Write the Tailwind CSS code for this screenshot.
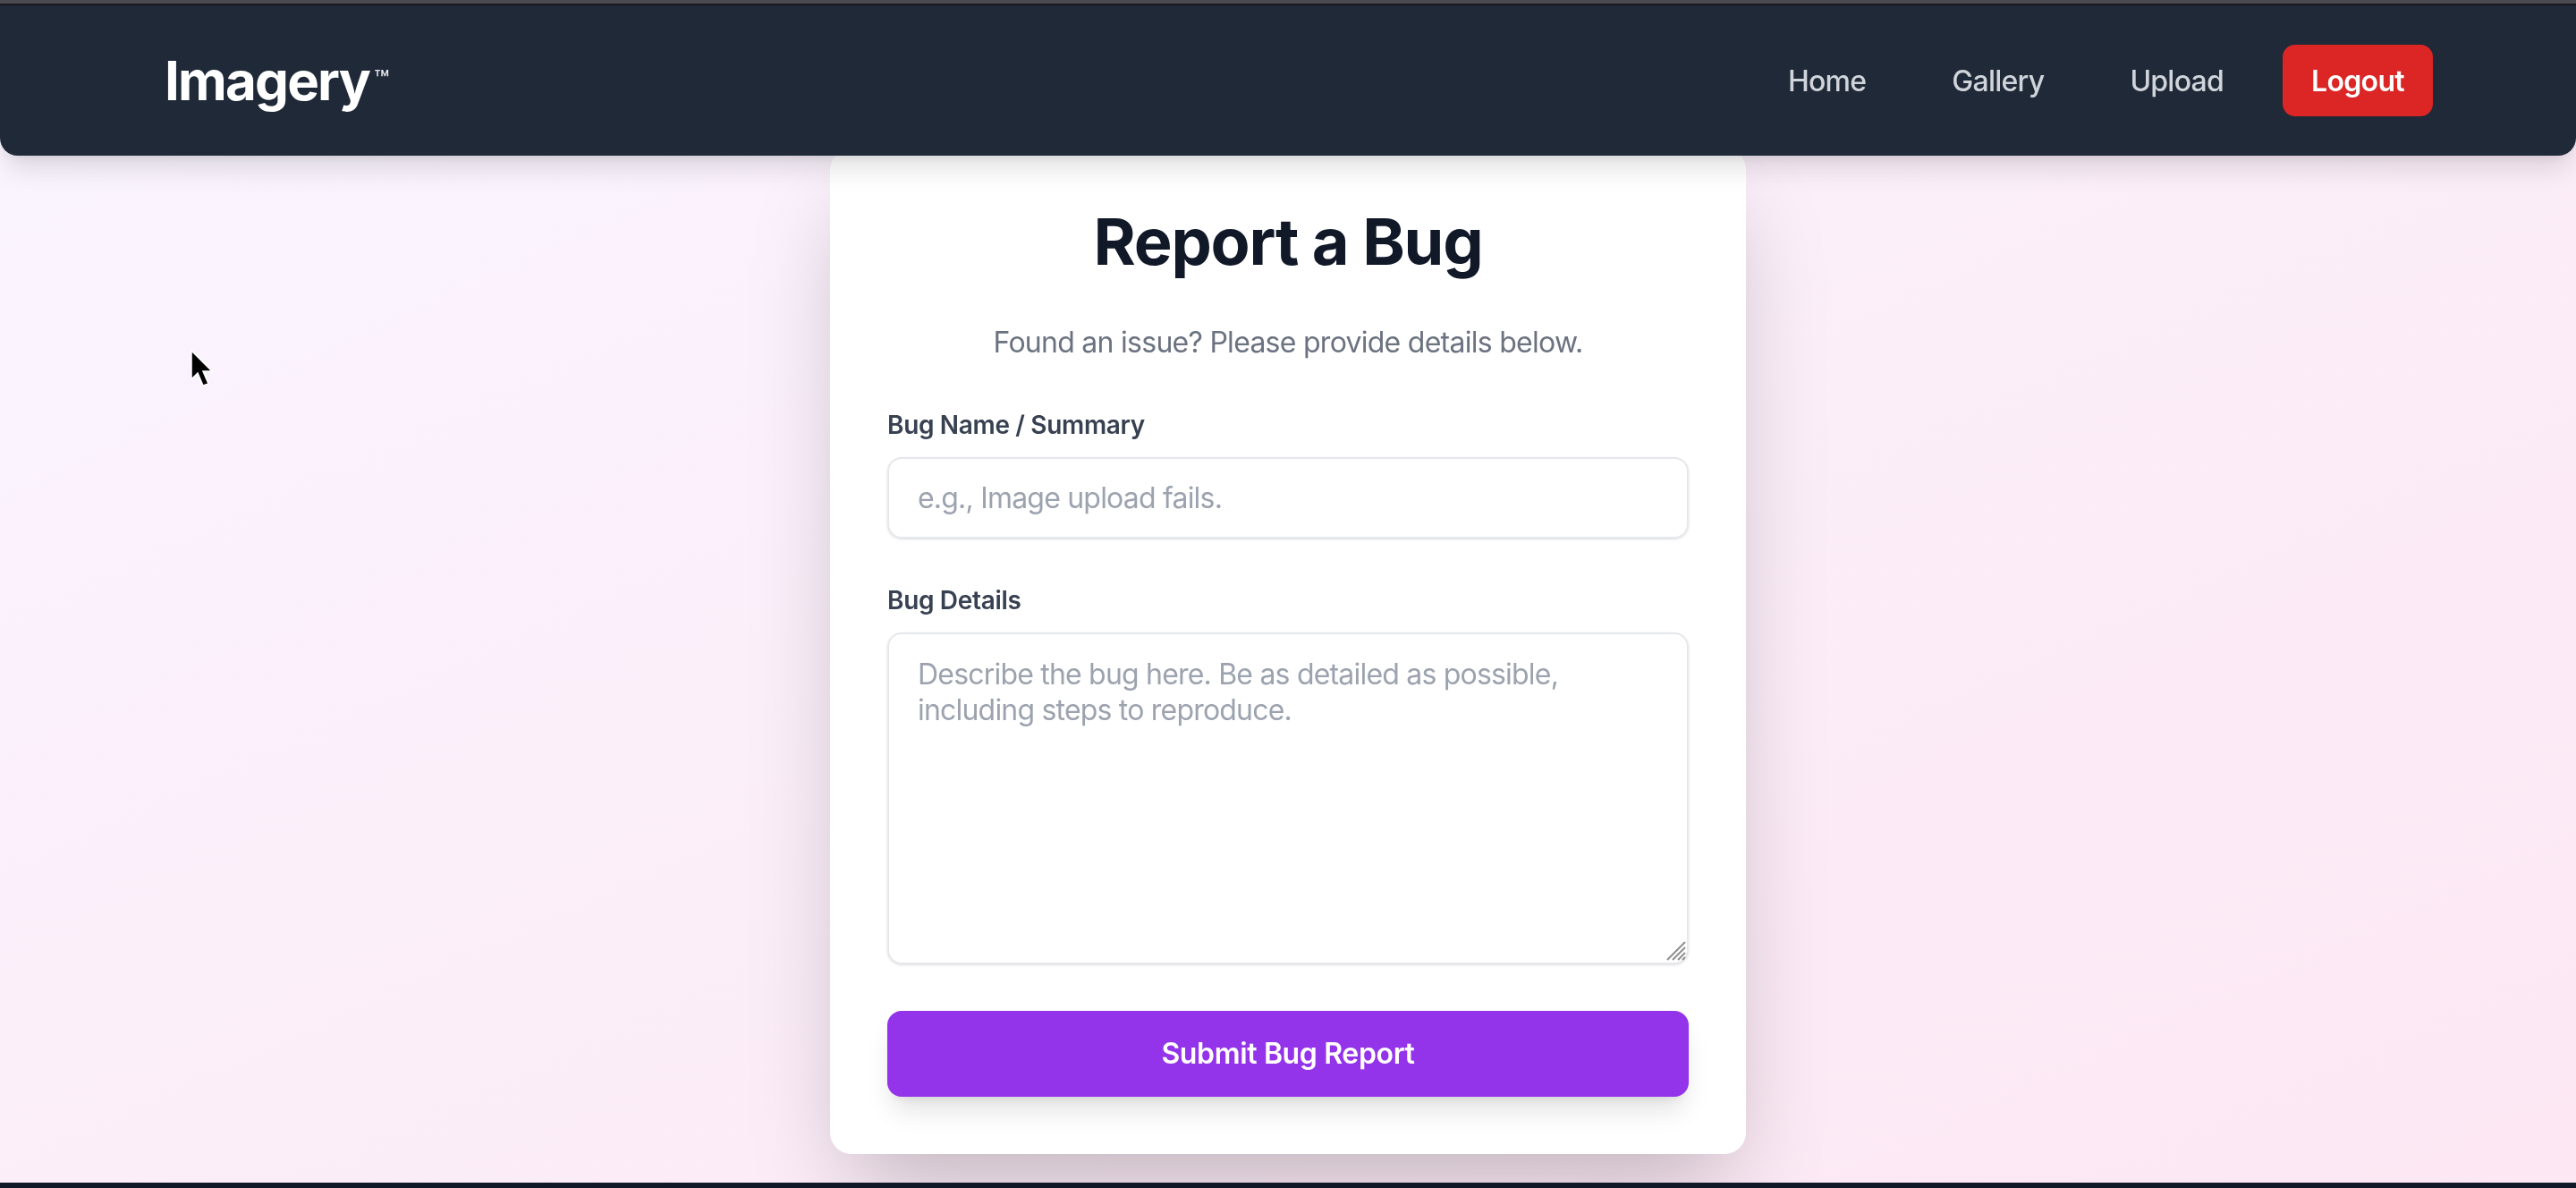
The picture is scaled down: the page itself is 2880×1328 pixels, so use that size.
<!doctype html>
<html lang="en">
<head>
<meta charset="utf-8">
<script src="https://cdn.jsdelivr.net/npm/@tailwindcss/browser@4"></script>
<title>Imagery - Report a Bug</title>
</head>
<body class="h-[1328px] w-[2880px] overflow-hidden bg-[#111827] font-['Inter',sans-serif]">
<div class="h-[4px] bg-[#4b4b52]"></div>
<div class="h-[2px] bg-[#17181d]"></div>
<div class="relative h-[1316px] overflow-hidden bg-linear-to-br/srgb from-[#faf5ff] to-[#fce7f3] blur-[0.6px]">
  <nav class="relative z-10 flex h-[168px] items-center justify-between rounded-b-[20px] bg-[#1f2937] pl-[184px] pr-[160px] shadow-[0_20px_30px_-6px_rgba(0,0,0,0.12),0_8px_12px_-8px_rgba(0,0,0,0.1)]">
    <a class="flex items-start text-[60px] leading-[80px] font-bold tracking-[-1.8px] text-white">Imagery<span class="mt-[24px] ml-[5px] text-[28px] leading-[30px] font-medium tracking-normal text-gray-200">™</span></a>
    <div class="flex items-center gap-8">
      <a class="px-8 pt-[2px] text-[32px] leading-[48px] font-medium tracking-[-0.75px] text-[#d1d5db]">Home</a>
      <a class="px-8 pt-[2px] text-[32px] leading-[48px] font-medium tracking-[-0.75px] text-[#d1d5db]">Gallery</a>
      <a class="pl-8 pr-[34px] pt-[2px] text-[32px] leading-[48px] font-medium tracking-[-0.75px] text-[#d1d5db]">Upload</a>
      <a class="flex h-[80px] w-[168px] items-center justify-center rounded-[14px] bg-[#dc2626] pt-[2px] text-[32px] font-semibold tracking-[-0.7px] text-white">Logout</a>
    </div>
  </nav>
  <main class="-mt-[8px] flex justify-center">
    <div class="h-[1124px] w-[1024px] rounded-[24px] bg-white p-16 shadow-[0_50px_100px_-24px_rgba(0,0,0,0.25)]">
      <h1 class="text-center text-[72px] leading-[80px] font-bold tracking-[-1.25px] text-[#111827]">Report a Bug</h1>
      <p class="mt-[49px] text-center text-[32px] leading-[48px] tracking-[-0.73px] text-[#6b7280]">Found an issue? Please provide details below.</p>
      <form>
        <label class="mt-[48px] block text-[28px] leading-[40px] font-semibold tracking-[-0.33px] text-[#374151]">Bug Name / Summary</label>
        <input class="mt-[16px] block h-[91px] w-full rounded-[16px] border-2 border-[#e5e7eb] px-8 text-[32px] tracking-[-0.8px] shadow-sm placeholder:text-[#9ca3af]" placeholder="e.g., Image upload fails.">
        <label class="mt-[49px] block text-[28px] leading-[40px] font-semibold tracking-[-0.33px] text-[#374151]">Bug Details</label>
        <div class="relative mt-[16px]">
          <textarea class="block h-[371px] w-full resize-none rounded-[16px] border-2 border-[#e5e7eb] px-8 pt-[25px] pb-[20px] text-[32px] leading-[40px] tracking-[-0.8px] shadow-sm placeholder:text-[#9ca3af]" placeholder="Describe the bug here. Be as detailed as possible, including steps to reproduce."></textarea>
          <svg class="absolute right-[3px] bottom-[4px] h-[22px] w-[22px]" viewBox="0 0 22 22" fill="none" stroke="#8f8f8f" stroke-width="2"><path d="M1 21L21 1M7 21L21 7M13 21L21 13M18 21L21 18"/></svg>
        </div>
        <button type="button" class="mt-[52px] block h-[96px] w-full rounded-[16px] bg-[#9333ea] text-[32px] font-semibold tracking-[-0.35px] text-white shadow-[0_20px_30px_-6px_rgba(0,0,0,0.12),0_8px_12px_-8px_rgba(0,0,0,0.1)]">Submit Bug Report</button>
      </form>
    </div>
  </main>
  <svg class="absolute left-[212px] top-[385px] h-[42px] w-[26px]" viewBox="0 0 26 42"><path d="M2 1V33L9 26L15 40L21 38L15 24H25Z" fill="#000" stroke="#fff" stroke-width="1.5"/></svg>
</div>
</body>
</html>
